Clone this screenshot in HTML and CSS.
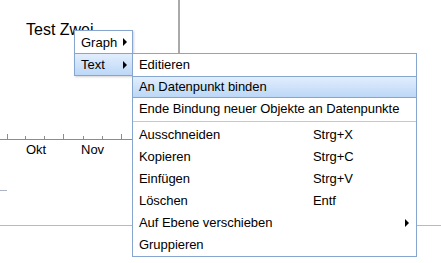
FILE: index.html
```html
<!DOCTYPE html>
<html lang="de">
<head>
<meta charset="utf-8">
<title>Kontextmenü</title>
<link rel="stylesheet" href="styles.css">
</head>
<body>
<div class="stage">
  <div class="chart">
    <div class="vline"></div>
    <div class="title">Test Zwei</div>
    <div class="axis">
      <span class="tick major" style="left:7px"></span>
      <span class="tick" style="left:25px"></span>
      <span class="tick" style="left:44px"></span>
      <span class="tick major" style="left:63px"></span>
      <span class="tick" style="left:83px"></span>
      <span class="tick" style="left:102px"></span>
      <span class="tick major" style="left:121px"></span>
    </div>
    <div class="label" style="left:26px">Okt</div>
    <div class="label" style="left:81px">Nov</div>
    <div class="stub"></div>
    <div class="hline"></div>
  </div>

  <div class="menu menu-main">
    <div class="item">
      <span class="text">Graph</span>
      <span class="arrow"></span>
    </div>
    <div class="item active">
      <span class="text">Text</span>
      <span class="arrow"></span>
    </div>
  </div>

  <div class="menu menu-sub">
    <div class="row">Editieren</div>
    <div class="row active">An Datenpunkt binden</div>
    <div class="row">Ende Bindung neuer Objekte an Datenpunkte</div>
    <div class="sep"></div>
    <div class="row cmd"><span>Ausschneiden</span><span>Strg+X</span></div>
    <div class="row cmd"><span>Kopieren</span><span>Strg+C</span></div>
    <div class="row cmd"><span>Einfügen</span><span>Strg+V</span></div>
    <div class="row cmd"><span>Löschen</span><span>Entf</span></div>
    <div class="row cmd"><span>Auf Ebene verschieben</span><span></span><span class="arrow"></span></div>
    <div class="row cmd"><span>Gruppieren</span><span></span></div>
  </div>
</div>
</body>
</html>
```

FILE: styles.css
```css
html, body {
  margin: 0;
  padding: 0;
  background: #ffffff;
}
body {
  font-family: "Liberation Sans", Arial, sans-serif;
  color: #000;
}
.stage {
  position: relative;
  width: 441px;
  height: 263px;
  overflow: hidden;
}
.chart {
  position: absolute;
  inset: 0;
}
.vline {
  position: absolute;
  left: 178px;
  top: 0;
  width: 2px;
  height: 53px;
  background: #a9a9a9;
}
.title {
  position: absolute;
  left: 26px;
  top: 20px;
  font-size: 16px;
  line-height: 20px;
}
.axis {
  position: absolute;
  left: 0;
  top: 139px;
  width: 134px;
  height: 1px;
  background: #8c8c8c;
}
.tick {
  position: absolute;
  bottom: 1px;
  width: 1px;
  height: 3px;
  background: #8c8c8c;
}
.tick.major {
  height: 5px;
}
.label {
  position: absolute;
  top: 142px;
  font-size: 13px;
  line-height: 16px;
}
.stub {
  position: absolute;
  left: 0;
  top: 190px;
  width: 7px;
  height: 1px;
  background: #aab4c6;
}
.hline {
  position: absolute;
  left: 0;
  right: 0;
  top: 225px;
  height: 1px;
  background: #b4b9c4;
}

.menu {
  position: absolute;
  background: #fff;
  border: 1px solid #86a6cf;
  box-shadow: 1px 1px 2px rgba(0, 0, 0, 0.18);
  font-size: 13px;
  box-sizing: border-box;
}
.menu-main {
  left: 74px;
  top: 30px;
  width: 59px;
  height: 46px;
  display: flex;
  flex-direction: column;
}
.menu-main .item {
  height: 22px;
  display: flex;
  align-items: center;
  justify-content: space-between;
  padding: 0 5px 0 6px;
  box-sizing: border-box;
}
.menu-main .item.active {
  height: 22px;
  border-top: 1px solid #86a6cf;
  background: linear-gradient(#e2eefd, #bcd7f7);
}
.arrow {
  width: 0;
  height: 0;
  border-top: 4px solid transparent;
  border-bottom: 4px solid transparent;
  border-left: 4px solid #000;
}
.menu-sub {
  left: 132px;
  top: 53px;
  width: 285px;
  height: 204px;
  display: flex;
  flex-direction: column;
  box-shadow: none;
  letter-spacing: -0.05px;
}
.row {
  height: 22px;
  line-height: 22px;
  padding: 0 6px;
  box-sizing: border-box;
  flex: none;
}
.row.active {
  border-top: 1px solid #86a6cf;
  border-bottom: 1px solid #86a6cf;
  background: linear-gradient(#e2eefd, #bcd7f7);
  line-height: 20px;
}
.sep {
  height: 1px;
  margin: 1px 0 2px;
  background: #c5c9d0;
  flex: none;
}
.row.cmd {
  display: grid;
  grid-template-columns: 174px 1fr auto;
  align-items: center;
  padding-right: 7px;
}
```
